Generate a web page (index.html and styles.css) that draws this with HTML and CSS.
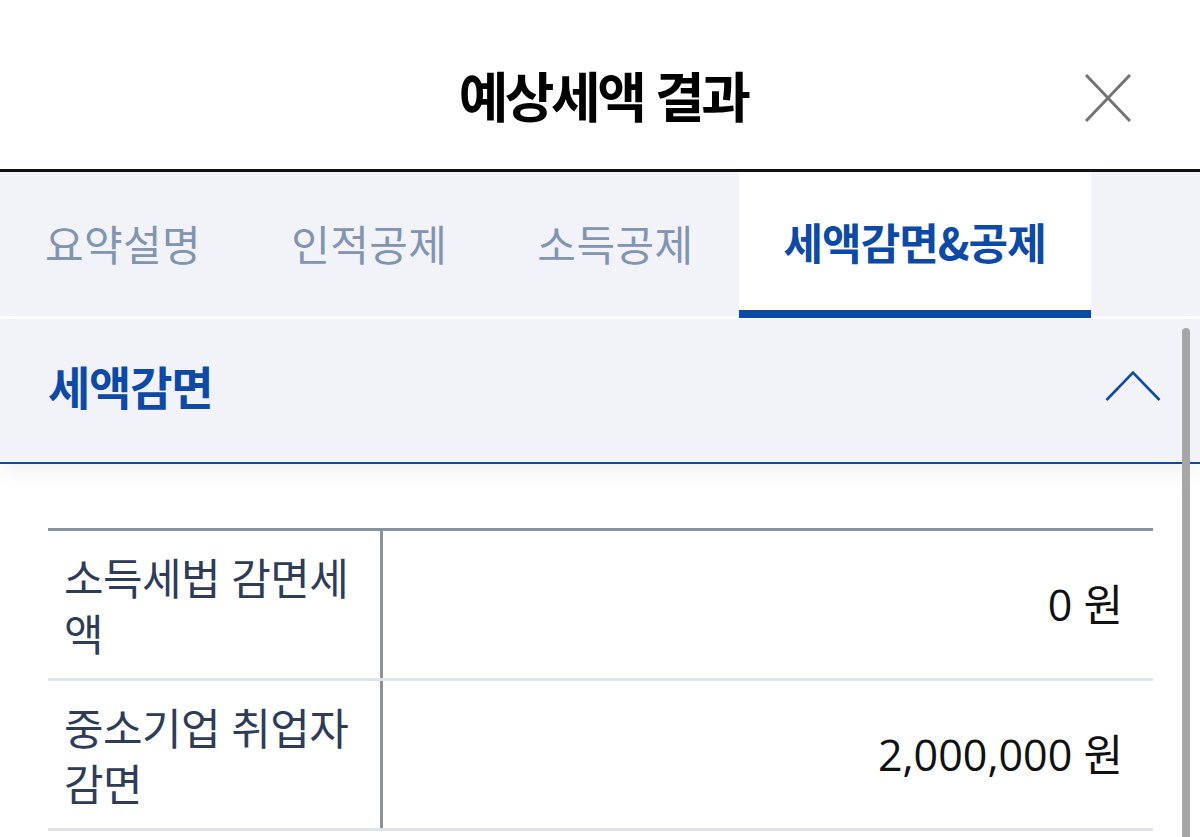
FILE: index.html
```html
<!DOCTYPE html>
<html lang="ko">
<head>
  <meta charset="UTF-8" />
  <meta name="viewport" content="width=device-width, initial-scale=1.0"/>
  <title>예상세액 결과</title>
  <link rel="stylesheet" href="styles.css">
</head>
<body>
  <div class="popup">
    <header class="popup-head">
      <h1>예상세액 결과</h1>
      <button class="btn-close" type="button" aria-label="닫기">
        <svg width="46" height="48" viewBox="0 0 46 48">
          <path d="M1 1 L45 47 M45 1 L1 47" stroke="#737373" stroke-width="3" fill="none"/>
        </svg>
      </button>
    </header>

    <nav class="tabs">
      <a class="tab">요약설명</a>
      <a class="tab">인적공제</a>
      <a class="tab">소득공제</a>
      <a class="tab on">세액감면&amp;공제</a>
    </nav>

    <div class="content">
      <div class="acc-head">
        <h2>세액감면</h2>
        <svg class="chev" width="56" height="32" viewBox="0 0 56 32">
          <path d="M1.5 30 L28 2.5 L54.5 30" stroke="#0d4aa8" stroke-width="2.6" fill="none"/>
        </svg>
      </div>

      <table class="tbl">
        <tr>
          <th>소득세법 감면세액</th>
          <td>0 원</td>
        </tr>
        <tr>
          <th>중소기업 취업자 감면</th>
          <td>2,000,000 원</td>
        </tr>
      </table>

      <div class="scrollbar"></div>
    </div>
  </div>
</body>
</html>
```

FILE: styles.css
```css
* {
  box-sizing: border-box;
}
body {
  margin: 0;
  background: #fff;
  font-family: "Noto Sans CJK KR", "Noto Sans", sans-serif;
  overflow: hidden;
}
.popup {
  width: 1200px;
  height: 837px;
  overflow: hidden;
}
.popup-head {
  height: 172px;
  border-bottom: 3px solid #111;
  display: grid;
  grid-template-columns: 1fr auto 1fr;
  align-items: center;
  padding-top: 20px;
}
.popup-head h1 {
  grid-column: 2;
  margin: 0 0 0 6px;
  font-size: 54px;
  font-weight: 700;
  letter-spacing: -3.5px;
  color: #000;
}
.btn-close {
  grid-column: 3;
  justify-self: end;
  margin: 6px 69px 0 0;
  padding: 0;
  border: 0;
  background: none;
  display: flex;
}
.tabs {
  display: flex;
  align-items: flex-start;
  height: 147px;
  background: #f1f3f8;
  border-bottom: 3px solid #fff;
}
.tab {
  height: 144px;
  padding: 0 45px 4px;
  display: flex;
  align-items: center;
  font-size: 42px;
  letter-spacing: 0.4px;
  color: #8194b0;
}
.tab.on {
  height: 146px;
  background: #fff;
  color: #0d4aa8;
  font-weight: 700;
  font-size: 43px;
  letter-spacing: -1px;
  border-bottom: 8px solid #0c4aa6;
  padding-bottom: 0;
}
.content {
  position: relative;
}
.acc-head {
  height: 145px;
  background: #f1f3f8;
  border-bottom: 2px solid #0d4aa8;
  display: flex;
  align-items: center;
  justify-content: space-between;
  padding: 0 39px 0 48px;
  box-shadow: 0 10px 20px rgba(0, 0, 0, 0.05);
}
.acc-head h2 {
  margin: 0 0 12px;
  font-size: 46px;
  font-weight: 700;
  letter-spacing: -1.2px;
  color: #0d4aa8;
}
.chev {
  margin-bottom: 9px;
}
.tbl {
  margin: 64px 47px 0 48px;
  width: 1105px;
  border-collapse: collapse;
  border-top: 3px solid #8a929f;
}
.tbl th,
.tbl td {
  height: 150px;
  border-bottom: 3px solid #dfe3ea;
  line-height: 56px;
  font-weight: 400;
}
.tbl th {
  width: 333px;
  padding: 10px 16px 12px;
  text-align: left;
  font-size: 43px;
  color: #2f3c57;
  letter-spacing: -0.6px;
  border-right: 3px solid #8a929f;
}
.tbl td {
  padding: 0 30px 0 16px;
  text-align: right;
  font-family: "Open Sans", "Noto Sans CJK KR", sans-serif;
  font-size: 43px;
  color: #111;
}
.scrollbar {
  position: absolute;
  top: 9px;
  right: 10px;
  width: 8px;
  height: 600px;
  border-radius: 4px;
  background: #a6a6a6;
}
```
